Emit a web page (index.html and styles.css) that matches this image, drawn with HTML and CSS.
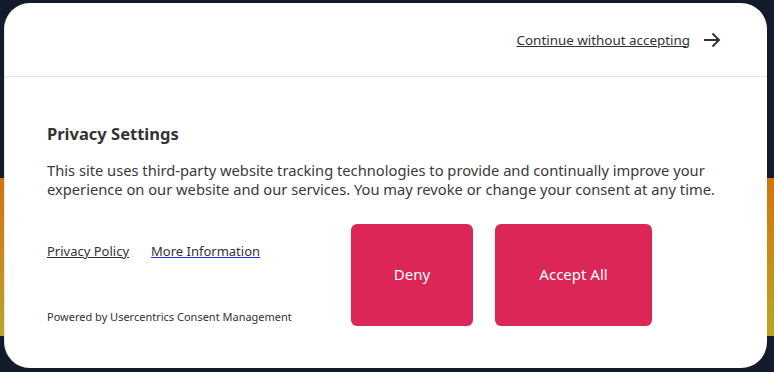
FILE: index.html
```html
<!DOCTYPE html>
<html lang="en">
<head>
    <meta charset="UTF-8">
    <meta name="viewport" content="width=device-width, initial-scale=1.0">
    <title>Privacy Settings</title>
    <link rel="stylesheet" href="styles.css">
</head>
<body>
    <div class="dialog">
        <div class="dialog-header">
            <a href="#" class="skip-link">Continue without accepting</a>
            <svg class="arrow" width="18" height="16" viewBox="0 0 18 16">
                <path d="M1 8h15M9.5 1.5L16 8l-6.5 6.5" fill="none" stroke="#333" stroke-width="2"/>
            </svg>
        </div>
        <div class="dialog-body">
            <h2 class="title">Privacy Settings</h2>
            <p class="description">This site uses third-party website tracking technologies to provide and continually improve your experience on our website and our services. You may revoke or change your consent at any time.</p>
            <div class="bottom">
                <div class="links-col">
                    <div class="links">
                        <a href="#" class="link">Privacy Policy</a>
                        <a href="#" class="link link-blue">More Information</a>
                    </div>
                    <p class="powered">Powered by Usercentrics Consent Management</p>
                </div>
                <div class="buttons">
                    <button class="btn btn-deny">Deny</button>
                    <button class="btn btn-accept">Accept All</button>
                </div>
            </div>
        </div>
    </div>
</body>
</html>
```

FILE: styles.css
```css
html, body {
    height: 100%;
}
body {
    margin: 0;
    font-family: "Noto Sans", "Open Sans", sans-serif;
    background: linear-gradient(to bottom, #121a2c 0, #121a2c 178px, #d5720e 178px, #b8a626 336px, #121a2c 336px);
    overflow: hidden;
}
.dialog {
    margin: 3px 7px 0 4px;
    height: 365px;
    background-color: #fff;
    border-radius: 26px;
    box-sizing: border-box;
    border-left: 1px solid #e6e6e6;
    display: flex;
    flex-direction: column;
}
.dialog-header {
    height: 73px;
    border-bottom: 1px solid #e4e4e4;
    display: flex;
    align-items: center;
    justify-content: flex-end;
    padding-right: 46px;
    gap: 13px;
}
.skip-link {
    color: #333;
    font-size: 13.4px;
    text-decoration: underline;
}
.arrow {
    display: block;
}
.dialog-body {
    padding: 45px 42px 0 42px;
}
.title {
    margin: 0;
    font-size: 16.5px;
    font-weight: bold;
    color: #333;
}
.description {
    margin: 16px 0 0 0;
    font-size: 14.7px;
    line-height: 19px;
    color: #3a3a3a;
}
.bottom {
    display: flex;
    margin-top: 25px;
}
.links-col {
    width: 304px;
}
.links {
    display: flex;
    gap: 22px;
    padding-top: 18px;
}
.link {
    font-size: 13px;
    color: #333;
    text-decoration: underline;
}
.link-blue {
    text-decoration-color: #2a2cf0;
}
.powered {
    margin: 49px 0 0 0;
    font-size: 11px;
    color: #333;
}
.buttons {
    display: flex;
    gap: 22px;
}
.btn {
    height: 102px;
    border: none;
    border-radius: 6px;
    background-color: #dc2658;
    color: #fff;
    font-family: inherit;
    font-size: 15px;
    padding-bottom: 3px;
    cursor: pointer;
}
.btn-deny {
    width: 122px;
}
.btn-accept {
    width: 157px;
}
```
